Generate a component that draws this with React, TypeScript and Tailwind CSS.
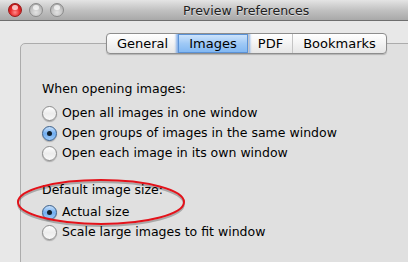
import React from 'react';

const font = { fontFamily: '"Lucida Grande", "DejaVu Sans", "Liberation Sans", sans-serif' };

function Light({ color }: { color: 'red' | 'gray' }) {
  return (
    <span
      className={`relative block h-[14px] w-[14px] rounded-full border ${
        color === 'red'
          ? 'border-[#9a1a1a] bg-[radial-gradient(circle_at_50%_70%,#ff8a8a_0%,#e82a2a_45%,#a80f0f_100%)]'
          : 'border-[#8a8a8a] bg-[radial-gradient(circle_at_50%_70%,#e2e2e2_0%,#c4c4c4_50%,#9c9c9c_100%)]'
      }`}
    >
      <span className="absolute left-[3px] top-[1px] h-[5px] w-[6px] rounded-full bg-white/70" />
    </span>
  );
}

function Radio({ label, checked = false }: { label: string; checked?: boolean }) {
  return (
    <div className="flex h-[20px] items-center">
      <span
        className={`flex h-[15px] w-[15px] shrink-0 items-center justify-center rounded-full border shadow-[0_1px_1px_rgba(0,0,0,0.25)] ${
          checked
            ? 'border-[#3a5f8a] bg-[linear-gradient(#c9e1fb,#72aef0_50%,#9cc9f7)]'
            : 'border-[#8c8c8c] bg-[linear-gradient(#ffffff,#ececec_50%,#f8f8f8)]'
        }`}
      >
        {checked && <span className="h-[5px] w-[5px] rounded-full bg-[#10202e]" />}
      </span>
      <span className="ml-[5px] text-[12.5px] leading-none text-black">{label}</span>
    </div>
  );
}

const tabs = ['General', 'Images', 'PDF', 'Bookmarks'];
const tabWidths = ['w-[71px]', 'w-[70px]', 'w-[44px]', 'w-[94px]'];

export default function App() {
  return (
    <div className="h-[262px] w-[408px] overflow-hidden bg-[#e8e8e8]" style={font}>
      {/* title bar */}
      <div className="relative flex h-[21px] items-center border-b border-[#6e6e6e] bg-[linear-gradient(#e4e4e4,#c2c2c2_50%,#a9a9a9)]">
        <div className="flex gap-[7px] pl-[8px]">
          <Light color="red" />
          <Light color="gray" />
          <Light color="gray" />
        </div>
        <span className="absolute left-[183px] top-[3px] text-[12.5px] leading-[15px] text-[#202020] [text-shadow:0_1px_0_rgba(255,255,255,0.5)]">
          Preview Preferences
        </span>
      </div>

      {/* body */}
      <div className="pl-[20px] pt-[12px]">
        <div className="relative z-10 ml-[86px] flex h-[21px] w-fit overflow-hidden rounded-[4px] border border-[#8d8d8d] bg-[linear-gradient(#ffffff,#f3f3f3_50%,#e6e6e6)] shadow-[0_1px_1px_rgba(0,0,0,0.2)]">
          {tabs.map((t, i) => (
            <div
              key={t}
              className={`flex items-center justify-center text-[13px] leading-none text-black ${tabWidths[i]} ${
                i >= 2 ? 'border-l border-[#c4c4c4]' : ''
              } ${
                t === 'Images'
                  ? 'bg-[linear-gradient(#d2e6fc,#9fc9f6_50%,#7fb6f2)] shadow-[inset_0_0_0_1px_#5b92d6,0_0_2px_2px_rgba(90,150,230,0.7)]'
                  : ''
              }`}
            >
              {t}
            </div>
          ))}
        </div>

        <div className="relative -mt-[11px] h-[240px] w-[400px] rounded-tl-[5px] border border-[#acacac] bg-[#e0e0e0] pl-[21px] pt-[35px]">
          <div className="flex h-[20px] items-center text-[12.5px] leading-none text-black">When opening images:</div>
          <div className="mt-[4px]">
            <Radio label="Open all images in one window" />
            <Radio label="Open groups of images in the same window" checked />
            <Radio label="Open each image in its own window" />
          </div>

          <div className="mt-[17px] flex h-[20px] items-center text-[12.5px] leading-none text-black">Default image size:</div>
          <div className="mt-[2px]">
            <Radio label="Actual size" checked />
            <div className="h-[21px]">
              <Radio label="Scale large images to fit window" />
            </div>
          </div>

          <svg
            className="pointer-events-none absolute left-[-6px] top-[134px]"
            width="172"
            height="50"
            viewBox="0 0 172 50"
          >
            <ellipse cx="86" cy="26" rx="83" ry="22" fill="none" stroke="rgba(0,0,0,0.25)" strokeWidth="2" />
            <ellipse cx="86" cy="24" rx="83" ry="22" fill="none" stroke="#e3121a" strokeWidth="2" />
          </svg>
        </div>
      </div>
    </div>
  );
}
